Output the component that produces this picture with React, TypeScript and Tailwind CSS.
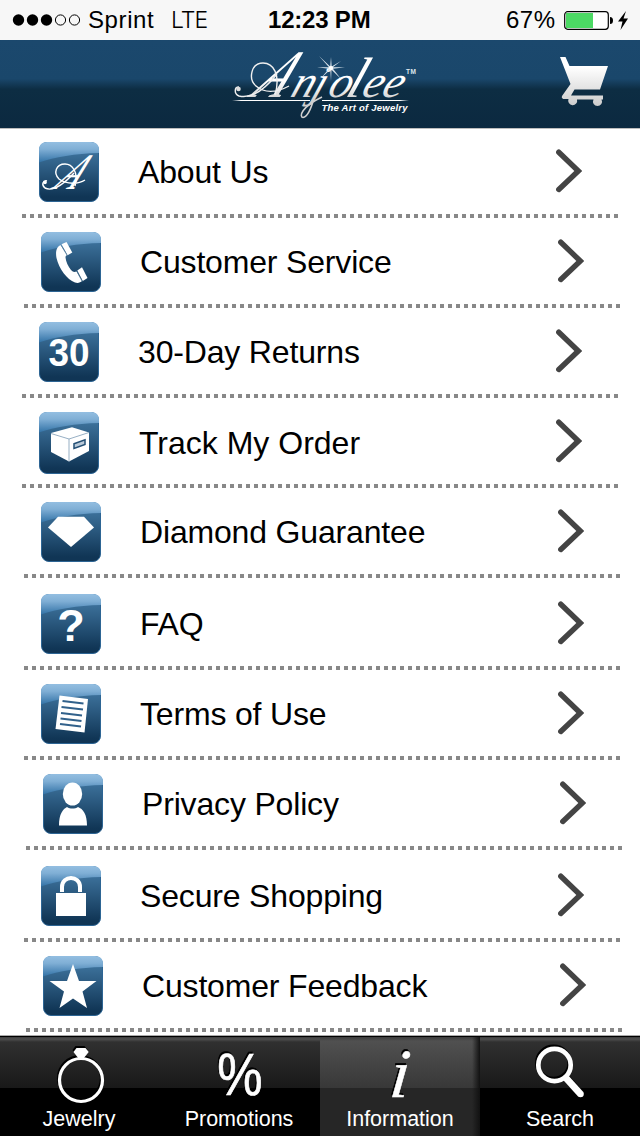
import type { ReactNode } from "react";

type Row = {
  label: string;
  /** total height of the row, dotted rule included */
  height: string;
  /** horizontal shift of the row content */
  shift: string;
  nudge: string;
  tall?: boolean;
  glyph: ReactNode;
};

const rows: Row[] = [
  {
    label: "About Us",
    height: "h-[89px]",
    shift: "ml-[22px]",
    nudge: "-ml-0.5",
    glyph: (
      <g>
        <text fontSize="51" fontStyle="italic" fill="#fff" fontFamily="Liberation Serif" transform="translate(13 47) skewX(-37) scale(0.700 1)">
          A
        </text>
        <path d="M36 44C40 30 33 22 26 22C17 22 14 31 20 37C28 43 40 42 46 38" fill="none" stroke="#fff" strokeWidth="1.400" />
        <path d="M8 39C4 38 2 43 6 46C14 50 24 43 35 31" fill="none" stroke="#fff" strokeWidth="1.400" />
        <circle cx="6" cy="40.500" r="1.800" fill="#fff" />
      </g>
    ),
  },
  {
    label: "Customer Service",
    height: "h-[90px]",
    shift: "ml-[24px]",
    nudge: "-ml-0.5",
    glyph: (
      <g fill="#fff">
        <path d="M19.500 13C15 15 14.500 21 15.500 26C18 37 26 47.500 34 50.500C37 51.500 39.500 50.500 41 49L35.500 39.500C33 40.500 32 40 30 38C27 34 25 30 24.500 25.500C24.500 24 25 23.500 26 23Z" />
        <path d="M20.500 12.200L25.500 10L31.300 20.500L26.600 23.300Z" />
        <path d="M36.300 38.500L41 35.300L46.500 46L41.800 49Z" />
        <path d="M19.800 12.700L26.300 23.700M35.700 38.800L41.200 49.500" stroke="#55809f" strokeWidth="0.700" />
      </g>
    ),
  },
  {
    label: "30-Day Returns",
    height: "h-[90px]",
    shift: "ml-[22px]",
    nudge: "-ml-0.5",
    glyph: (
      <text fontSize="38.500" fontWeight="bold" textAnchor="middle" fill="#fff" fontFamily="Liberation Sans" transform="translate(30 43.500) scale(0.960 1)">
        30
      </text>
    ),
  },
  {
    label: "Track My Order",
    height: "h-[90px]",
    shift: "ml-[22px]",
    nudge: "-ml-px tracking-[0px]",
    tall: true,
    glyph: (
      <g>
        <path d="M12 21L33 15.300L50 20.500L50 39L30 49.500L12 40Z" fill="#fff" />
        <path d="M12 21.500L30 27L50 20.500M30 27V49.500" fill="none" stroke="#8ba6bd" strokeWidth="0.900" />
        <path d="M35 31.700L46 27.800V32.500L35 36.500Z" fill="#b9c9d8" stroke="#244f74" strokeWidth="1.500" />
      </g>
    ),
  },
  {
    label: "Diamond Guarantee",
    height: "h-[90px]",
    shift: "ml-[24px]",
    nudge: "-ml-0.5",
    glyph: <path d="M17 14.700H43L53 25.500L30 45L7 25.500Z" fill="#fff" />,
  },
  {
    label: "FAQ",
    height: "h-[92px]",
    shift: "ml-[24px]",
    nudge: "-ml-0.5",
    glyph: (
      <text x="30" y="46.700" fontSize="45" fontWeight="bold" textAnchor="middle" fill="#fff" fontFamily="Liberation Sans">
        ?
      </text>
    ),
  },
  {
    label: "Terms of Use",
    height: "h-[90px]",
    shift: "ml-[24px]",
    nudge: "-ml-0.5",
    glyph: (
      <g>
        <path d="M18.500 11.500L47 15L43.500 48.500L14.500 45Z" fill="#fff" />
        <path d="M21.500 17L42.500 19.500M20.500 23L42 25.500M20 29L41 31.500M19.500 34.500L40.500 37M19 40L40 42.500" stroke="#31618b" strokeWidth="2.200" />
      </g>
    ),
  },
  {
    label: "Privacy Policy",
    height: "h-[90px]",
    shift: "ml-[26px]",
    nudge: "-ml-0.5",
    glyph: (
      <g fill="#fff">
        <ellipse cx="29.500" cy="20" rx="9.700" ry="11.500" />
        <path d="M16 51.500C16 40 20 35 24 33C27 35 32 35 35 33C40 35 44 40 44 51.500Z" />
      </g>
    ),
  },
  {
    label: "Secure Shopping",
    height: "h-[92px]",
    shift: "ml-[24px]",
    nudge: "-ml-0.5",
    glyph: (
      <g>
        <path d="M15 27H45V50H15Z" fill="#fff" />
        <path d="M21 26V21C21 9 39 9 39 21V26" fill="none" stroke="#fff" strokeWidth="4" />
      </g>
    ),
  },
  {
    label: "Customer Feedback",
    height: "h-[90px]",
    shift: "ml-[26px]",
    nudge: "-ml-0.5",
    glyph: <path d="M30 8L36 25H53.500L39.500 35.500L44 52L30 42.500L16.500 52L21 35.500L6.500 25H24Z" fill="#fff" />,
  },
];

function Tile({ tall, children }: { tall?: boolean; children: ReactNode }) {
  const h = tall ? 62 : 60;
  return (
    <svg width="60" height={h} viewBox={`0 0 60 ${h}`} className="shrink-0 overflow-visible">
      <rect x="0.500" y="0.500" width="59" height={h - 1} rx="7.500" fill="url(#tileBase)" stroke="#2d6594" />
      <path d="M0 20.500V8Q0 0 8 0H52Q60 0 60 8V11Q24 12 0 20.500Z" fill="url(#tileGloss)" />
      {children}
    </svg>
  );
}

function ListRow({ row }: { row: Row }) {
  return (
    <li className={`flex w-[596px] flex-col justify-end ${row.height} ${row.shift}`}>
      <div className="flex h-[72px] items-start pl-[17px]">
        <Tile tall={row.tall}>{row.glyph}</Tile>
        <span
          className={`w-[457px] shrink-0 pl-[41px] text-[32px] leading-10 tracking-[-0.17px] whitespace-nowrap text-black ${row.tall ? "pt-[11px]" : "pt-[10px]"}`}
        >
          <span className={row.nudge}>{row.label}</span>
        </span>
        <svg width="26" height="44" viewBox="0 0 26 44" className="mt-[7px] shrink-0">
          <path d="M2.800 3.200L22.300 22L2.800 40.500" fill="none" stroke="#444" strokeWidth="5.400" strokeLinecap="round" />
        </svg>
      </div>
      <div className="h-1 bg-[repeating-linear-gradient(90deg,#888_0px,#888_4px,transparent_4px,transparent_8px)]" />
    </li>
  );
}

function StatusBar() {
  return (
    <div className="flex h-10 items-center bg-[#f7f7f7] pl-3 text-black">
      <svg width="70" height="14" viewBox="0 0 70 14">
        <circle cx="6.500" cy="7" r="5.700" />
        <circle cx="20.500" cy="7" r="5.700" />
        <circle cx="34.500" cy="7" r="5.700" />
        <circle cx="48.500" cy="7" r="5.100" fill="none" stroke="#000" />
        <circle cx="62.500" cy="7" r="5.100" fill="none" stroke="#000" />
      </svg>
      <span className="w-[89px] pl-[6px] text-[24px] leading-[42px] tracking-[0.6px]">Sprint</span>
      <span className="w-[97px] font-[Inter] text-[23px] font-light leading-[42px] tracking-[-1px]">LTE</span>
      <span className="w-[238px] text-[24px] font-bold leading-[42px] tracking-[-0.2px]">12:23 PM</span>
      <span className="w-[58px] text-[24px] leading-[42px] tracking-[0.5px]">67%</span>
      <svg width="70" height="24" viewBox="0 0 70 24">
        <rect x="0.700" y="3.700" width="43.600" height="17.600" rx="3" fill="#fff" stroke="#000" strokeWidth="1.200" />
        <rect x="2" y="5" width="27" height="15" fill="#4cd964" />
        <path d="M46 9Q49 9 49 12.500Q49 16 46 16Z" />
        <path d="M62 3L54 13.500H58.500L56.500 22L64 10.500H59.500Z" />
      </svg>
    </div>
  );
}

function Brand() {
  return (
    <svg width="190" height="88" viewBox="228 40 190 88" className="overflow-visible">
      <g fill="url(#silver)" fontFamily="Liberation Serif" fontStyle="italic">
        <text fontSize="68" transform="translate(249 96.500) skewX(-36) scale(0.740 1)">
          A
        </text>
        <text fontSize="45" transform="translate(289 96.500) skewX(-20)" x="0 21 37 55 71 91">
          njo<tspan fontSize="57">l</tspan>ee
        </text>
      </g>
      <g fill="none" stroke="#f0f0f0" strokeWidth="1.400">
        <path d="M275 95C281 74 273 63 263 63C251 63 248 79 256 86C264 93 276 93 289 86" />
        <path d="M239 87C234 87 234 94 239 96C252 99 266 88 277 74" />
        <path d="M314 98C311 109 307 117 303 117.500C299 117 301 107 322 97" stroke="#d0d0d0" strokeWidth="1.600" />
      </g>
      <circle cx="238.500" cy="89" r="2.300" fill="#ddd" />
      <path d="M232 100.500H310M322 100.500H409" stroke="url(#ruleFade)" strokeWidth="1" />
      <path d="M331 57L331.700 66.500L341 61L332.800 67.300L345 67.300L333 68.700L341 79L331.500 69.700L331 81L330.300 69.700L321 78L329 68.700L317 67.300L329 67.300L319 56L330.200 66.500Z" fill="#d9e4ec" />
      <circle cx="331" cy="68" r="2" fill="#fff" />
      <text x="321.500" y="111" fontFamily="Liberation Sans" fontWeight="bold" fontStyle="italic" fontSize="9.500" textLength="86" fill="#fff">
        The Art of Jewelry
      </text>
      <text x="406" y="74" fontFamily="Liberation Sans" fontSize="6.500" fontWeight="bold" textLength="10" fill="#dfe7ee">
        TM
      </text>
    </svg>
  );
}

function Header() {
  return (
    <header className="flex h-[89px] items-start justify-between border-b border-[#bdbdbd] bg-[linear-gradient(180deg,#1b486d_0%,#1a476b_44%,#0d2d43_56%,#0b2940_100%)] pl-[228px] pr-[30px]">
      <Brand />
      <svg width="52" height="88" viewBox="558 40 52 88">
        <path
          d="M560 57H565.500L569.500 66H608L600 89.500H574.500L571 95.500H603V99.500H601.500A4.500 4.500 0 1 1 593.500 99.500H577A4.500 4.500 0 1 1 568.500 99H563Q561 97.500 562 96L570.500 84Z"
          fill="url(#cartFill)"
        />
      </svg>
    </header>
  );
}

const shadow = "overflow-visible drop-shadow-[-1px_-2px_0px_#000]";

const tabs: { label: string; icon: ReactNode; active?: boolean; offset: string }[] = [
  {
    label: "Jewelry",
    offset: "-ml-0.5",
    icon: (
      <svg width="160" height="64" viewBox="0 1036 160 64" className={shadow}>
        <circle cx="81" cy="1080" r="21.500" fill="none" stroke="#fff" strokeWidth="3.200" />
        <path d="M76.500 1048H85.500L88.700 1052L83.500 1058.500H78.500L73.500 1052Z" fill="#fff" />
      </svg>
    ),
  },
  {
    label: "Promotions",
    offset: "-ml-0.5",
    icon: (
      <svg width="160" height="64" viewBox="160 1036 160 64" className={shadow}>
        <text fontFamily="Liberation Sans" fontSize="52" fill="#fff" stroke="#fff" strokeWidth="0.600" textAnchor="middle" transform="translate(240 1094.500) scale(0.980 1.140)">
          %
        </text>
      </svg>
    ),
  },
  {
    label: "Information",
    active: true,
    offset: "",
    icon: (
      <svg width="160" height="64" viewBox="320 1036 160 64" className={shadow}>
        <text fontFamily="Liberation Serif" fontStyle="italic" fontSize="69" fill="#fff" stroke="#fff" strokeWidth="0.500" transform="translate(388.500 1096.500) skewX(-6)">
          i
        </text>
      </svg>
    ),
  },
  {
    label: "Search",
    offset: "",
    icon: (
      <svg width="160" height="64" viewBox="480 1036 160 64" className={shadow}>
        <circle cx="554.500" cy="1065" r="16.200" fill="none" stroke="#fff" strokeWidth="4.700" />
        <path d="M566 1078L580 1093.500" stroke="#fff" strokeWidth="7" />
        <circle cx="580.500" cy="1094" r="3.300" fill="#fff" />
      </svg>
    ),
  },
];

function TabBar() {
  return (
    <nav className="flex h-[101px] border-t border-[#aaa] bg-black">
      {tabs.map((tab) => (
        <div
          key={tab.label}
          className={`flex w-40 flex-col items-center border-t border-black text-white ${
            tab.active
              ? "bg-[linear-gradient(90deg,transparent_95%,#111_100%),linear-gradient(180deg,#3c3c3c_0px,#505050_4px,#383838_51px,#262626_51px)]"
              : "bg-[linear-gradient(180deg,#3a3a3a_0px,#505050_2px,#303030_5px,#191919_51px,#000_51px)]"
          }`}
        >
          <div className="-mt-px h-16">{tab.icon}</div>
          <span className={`mt-1 text-[21.5px] leading-[30px] ${tab.offset}`}>{tab.label}</span>
        </div>
      ))}
    </nav>
  );
}

function SharedGradients() {
  return (
    <svg width="0" height="0" className="absolute">
      <defs>
        <linearGradient id="tileBase" x1="0" y1="0" x2="0" y2="1">
          <stop offset="0.150" stopColor="#3d729c" />
          <stop offset="0.920" stopColor="#103555" />
        </linearGradient>
        <linearGradient id="tileGloss" x1="0" y1="0" x2="0" y2="1">
          <stop offset="0" stopColor="#93bee1" />
          <stop offset="0.350" stopColor="#80afd5" />
          <stop offset="1" stopColor="#3272a6" />
        </linearGradient>
        <linearGradient id="silver" x1="0" y1="0" x2="0" y2="1">
          <stop offset="0.600" stopColor="#fff" />
          <stop offset="0.850" stopColor="#cfcfcf" />
        </linearGradient>
        <linearGradient id="cartFill" x1="0" y1="0" x2="0" y2="1">
          <stop offset="0.200" stopColor="#fff" />
          <stop offset="1" stopColor="#ccc" />
        </linearGradient>
        <linearGradient id="ruleFade" gradientUnits="userSpaceOnUse" x1="232" y1="0" x2="409" y2="0">
          <stop offset="0" stopColor="#fff" stopOpacity="0" />
          <stop offset="0.050" stopColor="#fff" />
          <stop offset="0.950" stopColor="#fff" />
          <stop offset="1" stopColor="#fff" stopOpacity="0" />
        </linearGradient>
      </defs>
    </svg>
  );
}

export default function App() {
  return (
    <div className="flex h-[1136px] w-[640px] flex-col overflow-hidden bg-white font-['Liberation_Sans',sans-serif]">
      <SharedGradients />
      <StatusBar />
      <Header />
      <ul className="h-[906px]">
        {rows.map((row) => (
          <ListRow key={row.label} row={row} />
        ))}
      </ul>
      <TabBar />
    </div>
  );
}
